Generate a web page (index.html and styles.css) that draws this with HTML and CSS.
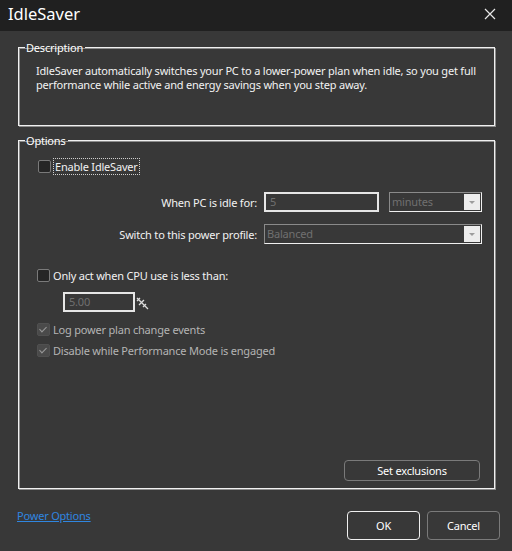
FILE: index.html
```html
<!DOCTYPE html>
<html lang="en">
<head>
  <meta charset="UTF-8">
  <title>IdleSaver</title>
  <link rel="stylesheet" href="styles.css">
</head>
<body>
  <div class="titlebar">
    <span class="title">IdleSaver</span>
    <svg class="close" width="12" height="12" viewBox="0 0 12 12">
      <path d="M1 1 L11 11 M11 1 L1 11" stroke="#e8e8e8" stroke-width="1.2" fill="none"/>
    </svg>
  </div>

  <div class="dialog">
    <fieldset class="group group-desc">
      <legend>Description</legend>
      <p class="desc">IdleSaver automatically switches your PC to a lower-power plan when idle, so you get full performance while active and energy savings when you step away.</p>
    </fieldset>

    <fieldset class="group group-options">
      <legend>Options</legend>

      <label class="check check-enable">
        <span class="box"></span>
        <span class="focus">Enable IdleSaver</span>
      </label>

      <div class="row row-idle">
        <span class="row-label">When PC is idle for:</span>
        <span class="field field-idle">5</span>
        <span class="combo combo-unit">minutes<span class="arrow"></span></span>
      </div>

      <div class="row row-profile">
        <span class="row-label">Switch to this power profile:</span>
        <span class="combo combo-profile">Balanced<span class="arrow"></span></span>
      </div>

      <label class="check check-cpu">
        <span class="box"></span>
        <span>Only act when CPU use is less than:</span>
      </label>

      <div class="cpu-row">
        <span class="field field-cpu">5.00</span>
        <svg class="drag" width="13" height="13" viewBox="0 0 13 13">
          <path d="M1 1 L12 12 M4 1 L1 4 M7 4 L4 7 M10 7 L7 10 M3 8 L8 3" stroke="#dcdcdc" stroke-width="1.3" fill="none"/>
        </svg>
      </div>

      <label class="check check-dim check-log">
        <span class="box checked"></span>
        <span>Log power plan change events</span>
      </label>
      <label class="check check-dim">
        <span class="box checked"></span>
        <span>Disable while Performance Mode is engaged</span>
      </label>

      <div class="spacer"></div>
      <div class="excl-row">
        <button class="btn btn-excl">Set exclusions</button>
      </div>
    </fieldset>

    <div class="footer">
      <a class="link" href="#">Power Options</a>
      <div class="actions">
        <button class="btn btn-ok">OK</button>
        <button class="btn btn-cancel">Cancel</button>
      </div>
    </div>
  </div>
</body>
</html>
```

FILE: styles.css
```css
html, body {
  margin: 0;
  height: 100%;
}
body {
  background: #383838;
  color: #f2f2f2;
  font-family: "Noto Sans", "Liberation Sans", sans-serif;
  font-size: 11px;
  letter-spacing: -0.2px;
  overflow: hidden;
}

.titlebar {
  height: 31px;
  background: #202020;
  display: flex;
  align-items: center;
  justify-content: space-between;
  padding: 0 16px 0 8px;
}
.title {
  font-size: 16.5px;
  letter-spacing: 0;
  color: #fff;
  margin-top: -4px;
}
.close {
  margin-top: -4px;
}

.dialog {
  padding: 9px 17px 0 18px;
}

.group {
  margin: 0;
  padding: 0;
  border: 1px solid #f0f0f0;
  box-shadow: 1px 1px 0 #8c8c8c, inset 1px 1px 0 #8c8c8c;
  min-width: 0;
}
.group legend {
  padding: 0 2px 0 1px;
  margin-left: 6px;
  line-height: 15px;
  color: #fff;
}
.group-desc {
  height: 86px;
  box-sizing: border-box;
}
.desc {
  margin: 9px 4px 0 17px;
  line-height: 14px;
}

.group-options {
  margin-top: 7px;
  height: 356px;
  box-sizing: border-box;
  display: flex;
  flex-direction: column;
}

.check {
  display: flex;
  align-items: center;
  gap: 3px;
  height: 14px;
}
.box {
  width: 11px;
  height: 11px;
  border: 1px solid #7a7a7a;
  border-radius: 2px;
  background: #262626;
  position: relative;
}
.box.checked {
  background: #4a4a4a;
  border-color: #505050;
}
.box.checked::after {
  content: "";
  position: absolute;
  left: 3px;
  top: 1px;
  width: 3px;
  height: 6px;
  border: solid #9a9a9a;
  border-width: 0 1px 1px 0;
  transform: rotate(45deg);
}
.check-enable {
  margin: 11px 0 0 19px;
}
.check-enable .focus {
  outline: 1px dotted #d0d0d0;
  padding: 0 1px;
}
.check-cpu {
  margin: 24px 0 0 18px;
}
.check-dim {
  margin: 7px 0 0 18px;
  color: #b4b4b4;
}
.check-log {
  margin-top: 10px;
}

.row {
  display: flex;
  align-items: center;
  height: 20px;
}
.row-label {
  width: 238px;
  text-align: right;
  padding-right: 7px;
}
.row-idle {
  margin-top: 19px;
}
.row-profile {
  margin-top: 12px;
}

.field {
  box-sizing: border-box;
  height: 20px;
  border: 2px solid #e6e6e6;
  color: #707070;
  padding: 0 4px;
  line-height: 16px;
}
.field-idle {
  width: 115px;
}
.combo {
  box-sizing: border-box;
  height: 20px;
  border: 1px solid;
  border-color: #8a8a8a #f0f0f0 #f0f0f0 #8a8a8a;
  color: #707070;
  padding-left: 2px;
  line-height: 18px;
  display: flex;
  justify-content: space-between;
}
.combo-unit {
  margin-left: 10px;
  width: 93px;
}
.combo-profile {
  width: 218px;
}
.arrow {
  width: 16px;
  height: 16px;
  margin: 1px;
  background: #ececec;
  position: relative;
}
.arrow::after {
  content: "";
  position: absolute;
  left: 5px;
  top: 7px;
  border: 3px solid transparent;
  border-top: 3px solid #9c9c9c;
  border-bottom: 0;
}

.cpu-row {
  display: flex;
  align-items: center;
  margin: 10px 0 0 44px;
}
.field-cpu {
  width: 72px;
}
.drag {
  margin-left: 1px;
  margin-top: 2px;
}

.spacer {
  flex: 1;
}
.excl-row {
  display: flex;
  justify-content: flex-end;
  padding: 0 14px 7px 0;
}

.btn {
  font-family: inherit;
  font-size: 11px;
  letter-spacing: -0.2px;
  color: #fff;
  background: #383838;
  border: 1px solid #7a7a7a;
  border-radius: 4px;
  padding: 0;
}
.btn-excl {
  width: 136px;
  height: 21px;
}

.footer {
  display: flex;
  justify-content: space-between;
  align-items: flex-start;
  margin: 22px -5px 0 -1px;
}
.link {
  color: #2f86e0;
  margin-top: -3px;
}
.actions {
  display: flex;
  gap: 7px;
}
.btn-ok {
  width: 73px;
  height: 29px;
  border-color: #f0f0f0;
}
.btn-cancel {
  width: 73px;
  height: 29px;
}
```
